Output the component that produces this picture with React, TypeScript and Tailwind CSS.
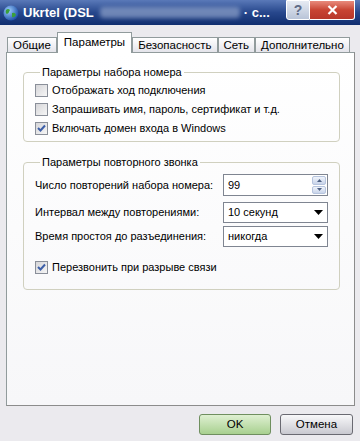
import React from 'react';

const font = { fontFamily: '"Liberation Sans", Arial, sans-serif' };

function CheckBox({ checked }: { checked?: boolean }) {
  return (
    <span className="w-[13px] h-[13px] border border-[#8a8f99] bg-gradient-to-br from-[#d6d6d9] to-[#f6f6f6] flex items-center justify-center shrink-0">
      {checked && (
        <svg width="9" height="9" viewBox="0 0 9 9">
          <path d="M1 4 L3.5 6.5 L8 1.5" fill="none" stroke="#3d5fa8" strokeWidth="2" />
        </svg>
      )}
    </span>
  );
}

function CheckRow({ label, checked }: { label: string; checked?: boolean }) {
  return (
    <div className="h-[19px] flex items-center gap-[4px]">
      <CheckBox checked={checked} />
      <span>{label}</span>
    </div>
  );
}

function DownArrow() {
  return (
    <svg width="9" height="5" viewBox="0 0 9 5">
      <path d="M0 0 H9 L4.5 5 Z" fill="#000" />
    </svg>
  );
}

function Select({ value }: { value: string }) {
  return (
    <div className="w-[105px] h-[21px] border border-[#7f8591] bg-white flex items-center pl-[4px]">
      <span className="flex-1">{value}</span>
      <span className="w-[17px] flex justify-center">
        <DownArrow />
      </span>
    </div>
  );
}

function Tab({ label, active }: { label: string; active?: boolean }) {
  if (active) {
    return (
      <div className="h-[21px] -mb-[1px] px-[6px] bg-white border border-[#919b9c] border-b-0 flex items-start pt-[3px] relative z-10">
        {label}
      </div>
    );
  }
  return (
    <div className="h-[15px] px-[5px] border border-[#919b9c] border-b-0 bg-gradient-to-b from-white to-[#e4e4ea] flex items-center">
      {label}
    </div>
  );
}

export default function App() {
  return (
    <div
      className="w-[360px] h-[441px] bg-[#ebeaee] flex flex-col text-[11px] leading-[13px] text-black overflow-hidden"
      style={font}
    >
      {/* Title bar */}
      <div className="h-[25px] bg-gradient-to-b from-[#5a79b8] via-[#27478c] to-[#102e6f] flex items-center pl-[3px] pr-[5px] whitespace-nowrap">
        <svg width="16" height="16" viewBox="0 0 16 16" className="shrink-0">
          <defs>
            <radialGradient id="g" cx="0.35" cy="0.35" r="0.7">
              <stop offset="0" stopColor="#9fd0ff" />
              <stop offset="1" stopColor="#1d4fa8" />
            </radialGradient>
          </defs>
          <circle cx="8" cy="8" r="7.5" fill="url(#g)" />
          <path d="M3 5 Q5 3 7 5 Q6 8 4 9 Q2 8 3 5 Z" fill="#3aa03a" />
          <path d="M9 8 Q12 7 13 10 Q11 13 9 12 Z" fill="#3aa03a" />
        </svg>
        <span className="ml-[4px] text-white font-bold text-[13px] leading-[16px]">Ukrtel (DSL</span>
        <span className="ml-[6px] w-[140px] h-[11px] bg-[#8ea2c9] blur-[2px] opacity-70 rounded-sm shrink-0" />
        <span className="ml-[4px] text-white font-bold text-[13px] leading-[16px]">· c...</span>
        <div className="flex-1" />
        <div className="flex self-start">
          <div className="w-[24px] h-[20px] border border-white rounded-bl-[3px] bg-gradient-to-b from-[#e6ebf3] to-[#b9c4d8] flex items-center justify-center text-[14px] font-bold text-[#5f6b86]">
            ?
          </div>
          <div className="w-[45px] h-[20px] border border-white border-l-0 rounded-br-[3px] bg-gradient-to-b from-[#e88a7c] via-[#c84433] to-[#b8372a] flex items-center justify-center">
            <svg width="11" height="10" viewBox="0 0 11 10">
              <path d="M1.5 1 L9.5 9 M9.5 1 L1.5 9" stroke="white" strokeWidth="2.2" />
            </svg>
          </div>
        </div>
      </div>

      {/* Tabs */}
      <div className="h-[27px] pl-[7px] flex items-end text-[11.5px]">
        <Tab label="Общие" />
        <Tab label="Параметры" active />
        <Tab label="Безопасность" />
        <Tab label="Сеть" />
        <Tab label="Дополнительно" />
      </div>

      {/* Panel */}
      <div className="ml-[6px] w-[349px] h-[354px] border border-[#919b9c] border-r-[#8c8c8c] border-b-[#8c8c8c] bg-gradient-to-b from-white to-[#f7f7f9] pl-[16px] pt-[13px]">
        <fieldset className="w-[317px] border border-[#d0d0bf] rounded-[4px] pl-[11px] pb-[3px]">
          <legend className="ml-[5px] px-[2px]">Параметры набора номера</legend>
          <div className="pt-[2px]">
            <CheckRow label="Отображать ход подключения" />
            <CheckRow label="Запрашивать имя, пароль, сертификат и т.д." />
            <CheckRow label="Включать домен входа в Windows" checked />
          </div>
        </fieldset>

        <fieldset className="mt-[14px] w-[317px] border border-[#d0d0bf] rounded-[4px] pl-[11px] pr-[11px] pb-[12px]">
          <legend className="ml-[5px] px-[2px]">Параметры повторного звонка</legend>
          <div className="pt-[5px] flex items-center justify-between">
            <span>Число повторений набора номера:</span>
            <div className="w-[105px] h-[22px] border border-[#7f8591] bg-white flex items-center pl-[4px]">
              <span className="flex-1">99</span>
              <div className="w-[15px] h-full flex flex-col gap-[1px] py-[1px] pr-[1px]">
                <div className="flex-1 bg-gradient-to-b from-[#f0f4fb] to-[#c8d4ea] border border-[#b6c4de] rounded-[2px] flex items-center justify-center">
                  <svg width="5" height="3" viewBox="0 0 5 3"><path d="M0 3 H5 L2.5 0 Z" fill="#4d6185" /></svg>
                </div>
                <div className="flex-1 bg-gradient-to-b from-[#f0f4fb] to-[#c8d4ea] border border-[#b6c4de] rounded-[2px] flex items-center justify-center">
                  <svg width="5" height="3" viewBox="0 0 5 3"><path d="M0 0 H5 L2.5 3 Z" fill="#4d6185" /></svg>
                </div>
              </div>
            </div>
          </div>
          <div className="mt-[6px] flex items-center justify-between">
            <span>Интервал между повторениями:</span>
            <Select value="10 секунд" />
          </div>
          <div className="mt-[3px] flex items-center justify-between">
            <span>Время простоя до разъединения:</span>
            <Select value="никогда" />
          </div>
          <div className="mt-[11px]">
            <CheckRow label="Перезвонить при разрыве связи" checked />
          </div>
        </fieldset>
      </div>

      {/* Buttons */}
      <div className="flex justify-end gap-[9px] pr-[7px] pt-[8px] text-[11.5px]">
        <button className="w-[72px] h-[21px] rounded-[3px] border border-[#6f8f5f] bg-gradient-to-b from-[#dff0d2] to-[#a8d08f]">
          OK
        </button>
        <button className="w-[73px] h-[21px] rounded-[3px] border border-[#6a6a72] bg-gradient-to-b from-[#f8f8fa] to-[#c9c9d0]">
          Отмена
        </button>
      </div>
    </div>
  );
}
